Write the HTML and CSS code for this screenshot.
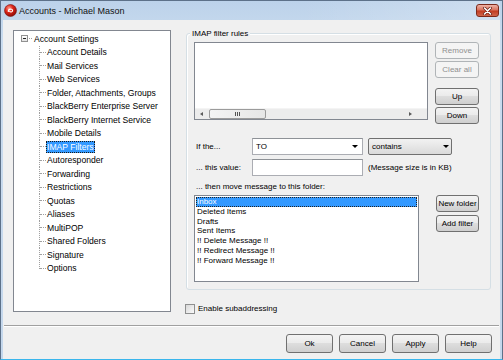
FILE: index.html
```html
<!DOCTYPE html>
<html>
<head>
	<title>Accounts - Michael Mason</title>
	<link rel="stylesheet" href="styles.css">
</head>
<body>
<div class="window">
	<div class="titlebar">
		<svg class="app-icon" width="13" height="13" viewBox="0 0 13 13">
			<defs>
				<radialGradient id="ball" cx="0.38" cy="0.32" r="0.7">
					<stop offset="0" stop-color="#ff9c8c"/>
					<stop offset="0.45" stop-color="#e0281c"/>
					<stop offset="1" stop-color="#8c0a06"/>
				</radialGradient>
			</defs>
			<circle cx="6.5" cy="6.5" r="6" fill="url(#ball)" stroke="#7a1410" stroke-width="0.6"/>
			<path d="M4.3 7.4 C4.3 4.6 8.6 4.4 8.6 6.6 C8.6 8.2 6.2 8.4 5.6 7.2" fill="none" stroke="#fff" stroke-width="1.1" stroke-linecap="round"/>
		</svg>
		<span class="title">Accounts - Michael Mason</span>
		<span class="close">
			<svg width="11" height="8" viewBox="0 0 11 8">
				<path d="M2.5 1 L8.5 7 M8.5 1 L2.5 7" stroke="#6a1f14" stroke-width="3" stroke-linecap="round"/>
				<path d="M2.5 1 L8.5 7 M8.5 1 L2.5 7" stroke="#fff" stroke-width="1.6" stroke-linecap="round"/>
			</svg>
		</span>
	</div>

	<div class="client">
		<div class="main">
			<div class="tree">
				<div class="tree-root">
					<span class="expander"></span>
					<span class="root-dash"></span>
					<span class="tree-label">Account Settings</span>
				</div>
				<ul class="tree-children">
					<li><span class="tree-label">Account Details</span></li>
					<li><span class="tree-label">Mail Services</span></li>
					<li><span class="tree-label">Web Services</span></li>
					<li><span class="tree-label">Folder, Attachments, Groups</span></li>
					<li><span class="tree-label">BlackBerry Enterprise Server</span></li>
					<li><span class="tree-label">BlackBerry Internet Service</span></li>
					<li><span class="tree-label">Mobile Details</span></li>
					<li class="selected"><span class="tree-label">IMAP Filters</span></li>
					<li><span class="tree-label">Autoresponder</span></li>
					<li><span class="tree-label">Forwarding</span></li>
					<li><span class="tree-label">Restrictions</span></li>
					<li><span class="tree-label">Quotas</span></li>
					<li><span class="tree-label">Aliases</span></li>
					<li><span class="tree-label">MultiPOP</span></li>
					<li><span class="tree-label">Shared Folders</span></li>
					<li><span class="tree-label">Signature</span></li>
					<li class="last"><span class="tree-label">Options</span></li>
				</ul>
			</div>

			<div class="panel">
				<div class="group">
					<div class="group-title">IMAP filter rules</div>

					<div class="rules-row">
						<div class="rules-list">
							<div class="rules-body"></div>
							<div class="hscroll">
								<span class="sb-btn"><span class="arrow-left"></span></span>
								<span class="thumb"><span class="grip"></span></span>
								<span class="track"></span>
								<span class="sb-btn right"><span class="arrow-right"></span></span>
							</div>
						</div>
						<div class="btn-col">
							<button class="btn disabled">Remove</button>
							<button class="btn disabled">Clear all</button>
							<button class="btn spaced">Up</button>
							<button class="btn">Down</button>
						</div>
					</div>

					<div class="field-row first">
						<span class="field-label">If the...</span>
						<div class="combo edit"><span>TO</span><span class="caret"></span></div>
						<div class="combo drop"><span>contains</span><span class="caret"></span></div>
					</div>
					<div class="field-row">
						<span class="field-label">... this value:</span>
						<div class="textbox"></div>
						<span class="note">(Message size is in KB)</span>
					</div>

					<div class="folder-caption">... then move message to this folder:</div>
					<div class="folder-row">
						<ul class="folder-list">
							<li class="selected">Inbox</li>
							<li>Deleted Items</li>
							<li>Drafts</li>
							<li>Sent Items</li>
							<li>!! Delete Message !!</li>
							<li>!! Redirect Message !!</li>
							<li>!! Forward Message !!</li>
						</ul>
						<div class="btn-col folder-btns">
							<button class="btn">New folder</button>
							<button class="btn">Add filter</button>
						</div>
					</div>
				</div>

				<label class="check-row"><span class="checkbox"></span>Enable subaddressing</label>
			</div>
		</div>

		<div class="footer">
			<button class="btn big">Ok</button>
			<button class="btn big">Cancel</button>
			<button class="btn big">Apply</button>
			<button class="btn big">Help</button>
		</div>
	</div>
</div>
</body>
</html>
```

FILE: styles.css
```css
*{
	margin: 0;
	padding: 0;
	box-sizing: border-box;
	list-style: none;
}
body{
	background: #fff;
	font-family: "Liberation Sans", Arial, sans-serif;
	font-size: 8px;
	color: #000;
}

/* window frame */
.window{
	width: 503px;
	height: 360px;
	border: 1px solid #5d7189;
	border-bottom-color: #3ab6ec;
	padding: 0 2px;
	background: linear-gradient(#bcd2ea, #cadcef 40px, #c4d7ec);
	display: flex;
	flex-direction: column;
}
.titlebar{
	height: 19px;
	display: flex;
	align-items: center;
	padding-left: 1px;
	background: linear-gradient(90deg, rgba(255,255,255,0) 60%, rgba(255,255,255,0.25));
}
.app-icon{
	margin-right: 2px;
}
.title{
	flex: 1;
	font-size: 9px;
	color: #111;
}
.close{
	width: 23px;
	height: 13px;
	margin-right: 1px;
	border: 1px solid #7d2a1b;
	border-radius: 3px;
	background: linear-gradient(#eeb3a6, #d9735e 45%, #c23d22 55%, #d0664c);
	display: flex;
	align-items: center;
	justify-content: center;
}
.client{
	flex: 1;
	background: #f0f0f0;
	display: flex;
	flex-direction: column;
}
.main{
	display: flex;
	gap: 15px;
	padding: 10px 0 0 10px;
}

/* tree */
.tree{
	width: 158px;
	height: 282px;
	background: #fff;
	border: 1px solid #828790;
	padding-top: 1px;
	font-size: 8.6px;
}
.tree-root{
	height: 13.5px;
	display: flex;
	align-items: center;
	padding-left: 7px;
}
.expander{
	width: 7px;
	height: 7px;
	border: 1px solid #919191;
	background: linear-gradient(#fff, #e2e2e2);
	display: flex;
	align-items: center;
	justify-content: center;
}
.expander:after{
	content: "";
	width: 3px;
	height: 1px;
	background: #222;
}
.root-dash{
	width: 3px;
	margin: 0 1px 0 1px;
	border-top: 1px dotted #a0a0a0;
}
.tree-label{
	line-height: 12px;
	padding: 0 1px;
	white-space: nowrap;
}
.tree-children{
	margin-left: 25px;
}
.tree-children li{
	height: 13.5px;
	display: flex;
	align-items: center;
	padding-left: 1px;
	background: linear-gradient(#a0a0a0 1px, transparent 1px) 0 0 / 1px 2px repeat-y;
}
.tree-children li.last{
	background: linear-gradient(#fff, #fff) 0 7px / 1px 100% no-repeat,
		linear-gradient(#a0a0a0 1px, transparent 1px) 0 0 / 1px 2px repeat-y;
}
.tree-children li:before{
	content: "";
	width: 6px;
	border-top: 1px dotted #a0a0a0;
}
.tree-children li .tree-label{
	margin-left: 0;
}
.tree-children li.selected .tree-label{
	background: #3399ff;
	color: #fff;
	outline: 1px dotted #1a1a1a;
	outline-offset: -1px;
}

/* right panel */
.panel{
	width: 305px;
	margin-top: 3px;
	display: flex;
	flex-direction: column;
}
.group{
	border: 1px solid #d5dfe5;
	border-radius: 3px;
	box-shadow: inset 1px 1px 0 #fff;
	padding: 0 7px 7px 7px;
}
.group-title{
	width: max-content;
	margin: -6px 0 0 -4px;
	padding: 0 2px;
	line-height: 11px;
	background: #f0f0f0;
}
.rules-row{
	display: flex;
	margin-top: 3px;
}
.rules-list{
	width: 234px;
	height: 78px;
	border: 1px solid #828790;
	background: #fff;
	display: flex;
	flex-direction: column;
}
.rules-body{
	flex: 1;
}
.hscroll{
	height: 11px;
	display: flex;
	background: #ececec;
	border-top: 1px solid #f4f4f4;
}
.sb-btn{
	width: 13px;
	display: flex;
	align-items: center;
	justify-content: center;
}
.sb-btn.right{
	margin-right: 10px;
}
.arrow-left{
	border-right: 3px solid #5a5a5a;
	border-top: 2px solid transparent;
	border-bottom: 2px solid transparent;
}
.arrow-right{
	border-left: 3px solid #5a5a5a;
	border-top: 2px solid transparent;
	border-bottom: 2px solid transparent;
}
.thumb{
	width: 57px;
	margin-left: 1px;
	border: 1px solid #9b9b9b;
	border-radius: 2px;
	background: linear-gradient(90deg, #f4f4f4, #e6e6e6);
	display: flex;
	align-items: center;
	justify-content: center;
}
.grip{
	width: 5px;
	height: 4px;
	background: repeating-linear-gradient(90deg, #555 0 1px, transparent 1px 2px);
}
.track{
	flex: 1;
}

/* buttons */
.btn-col{
	width: 44px;
	margin-left: 7px;
	display: flex;
	flex-direction: column;
	gap: 2px;
}
.btn-col .spaced{
	margin-top: 8px;
}
.btn{
	height: 17px;
	border: 1px solid #707070;
	border-radius: 3px;
	background: linear-gradient(#f3f3f3, #ebebeb 45%, #dddddd 50%, #cfcfcf);
	font-family: inherit;
	font-size: 8px;
	color: #000;
	display: flex;
	align-items: center;
	justify-content: center;
	white-space: nowrap;
}
.btn.disabled{
	border-color: #b0b4b7;
	background: #f4f4f4;
	color: #8f8f8f;
}
.btn.big{
	width: 47px;
	height: 19px;
}

/* fields */
.field-row{
	display: flex;
	align-items: center;
	margin-top: 4px;
	padding-left: 2px;
}
.field-row.first{
	margin-top: 14px;
}
.field-label{
	width: 56px;
}
.combo{
	height: 17px;
	display: flex;
	align-items: center;
	justify-content: space-between;
	padding: 0 4px 0 3px;
}
.combo.edit{
	width: 111px;
	background: #fff;
	border: 1px solid #abadb3;
	border-top-color: #8e9297;
}
.combo.drop{
	width: 84px;
	margin-left: 5px;
	border: 1px solid #707070;
	border-radius: 2px;
	background: linear-gradient(#f2f2f2, #e6e6e6 50%, #dadada);
	padding-right: 2px;
}
.caret{
	border-top: 3px solid #000;
	border-left: 3px solid transparent;
	border-right: 3px solid transparent;
}
.textbox{
	width: 111px;
	height: 17px;
	background: #fff;
	border: 1px solid #abadb3;
	border-top-color: #8e9297;
}
.note{
	margin-left: 5px;
}
.folder-caption{
	margin-top: 5px;
	padding-left: 2px;
	line-height: 11px;
}
.folder-row{
	display: flex;
	margin-top: 3px;
}
.folder-list{
	width: 225px;
	height: 87px;
	border: 1px solid #828790;
	background: #fff;
	padding: 1px;
}
.folder-list li{
	height: 9.75px;
	line-height: 9.75px;
	padding-left: 1px;
	white-space: nowrap;
}
.folder-list li.selected{
	background: #3399ff;
	color: #fff;
	outline: 1px dotted #222;
	outline-offset: -1px;
}
.folder-btns{
	width: 43px;
	margin-left: 17px;
	gap: 3px;
}

.check-row{
	height: 13px;
	margin: 12px 0 0 -1px;
	display: flex;
	align-items: center;
}
.checkbox{
	width: 10px;
	height: 10px;
	margin-right: 3px;
	border: 1px solid #8e8f8f;
	background: linear-gradient(135deg, #d8d8d8, #fafafa);
}

/* bottom buttons */
.footer{
	margin: auto 1px 0 1px;
	border-top: 1px solid #a0a0a0;
	box-shadow: inset 0 1px 0 #fff;
	padding: 8px 7px 6px 0;
	display: flex;
	justify-content: flex-end;
	gap: 6px;
}
```
